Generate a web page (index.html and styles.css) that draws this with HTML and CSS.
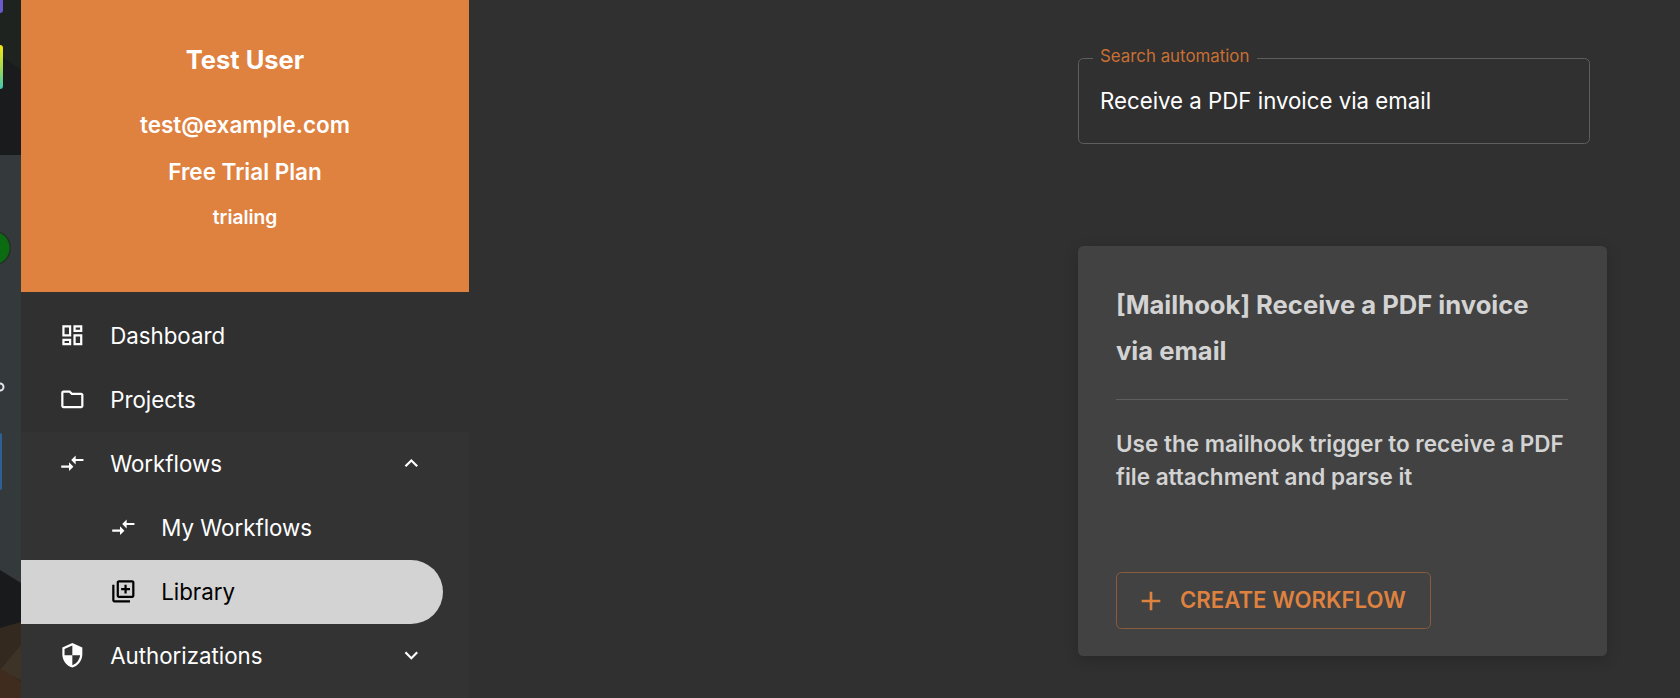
FILE: index.html
```html
<!DOCTYPE html>
<html lang="en">
<head>
<meta charset="utf-8">
<title>Automation library</title>
<link rel="stylesheet" href="styles.css">
</head>
<body>
<div class="app">
  <div class="backdrop">
    <svg class="backdrop-art" width="21" height="698" viewBox="0 0 21 698">
      <rect width="21" height="155" fill="#1a1b1d"/>
      <polygon points="0,0 21,0 21,70 0,55" fill="#1e231f"/>
      <rect x="-8" y="-10" width="11" height="23" rx="3" fill="#6a5acd"/>
      <defs><linearGradient id="rb" x1="0" y1="0" x2="0" y2="1"><stop offset="0" stop-color="#f5e614"/><stop offset="0.5" stop-color="#a6d94a"/><stop offset="1" stop-color="#3fc7b4"/></linearGradient></defs>
      <rect x="-8" y="45" width="11" height="44" rx="3" fill="url(#rb)"/>
      <rect y="155" width="21" height="428" fill="#343a3b"/>
      <circle cx="-7" cy="248" r="18" fill="#262f28"/>
      <circle cx="-7" cy="248" r="16.5" fill="#0b6b10"/>
      <rect x="-8" y="433" width="10" height="57" rx="2" fill="#2f5f95"/>
      <circle cx="0" cy="387" r="3.5" fill="none" stroke="#e6e6ee" stroke-width="2"/>
      <polygon points="0,570 21,583 21,698 0,698" fill="#191a1c"/>
      <polygon points="0,628 21,622 21,698 0,698" fill="#33291f"/>
      <polygon points="21,645 0,670 21,680" fill="#3d3427"/>
      <polygon points="0,668 21,682 21,698 0,698" fill="#402c1f"/>
    </svg>
  </div>
  <aside class="sidebar">
    <header class="profile">
      <h2 class="profile-name">Test User</h2>
      <p class="profile-line">test@example.com</p>
      <p class="profile-line">Free Trial Plan</p>
      <p class="profile-status">trialing</p>
    </header>
    <nav class="nav">
      <a class="nav-item">
        <svg class="nav-icon" viewBox="0 0 24 24"><path d="M19 5v2h-4V5h4M9 5v6H5V5h4m10 8v6h-4v-6h4M9 17v2H5v-2h4M21 3h-8v6h8V3zM11 3H3v10h8V3zm10 8h-8v10h8V11zm-10 4H3v6h8v-6z"/></svg>
        <span>Dashboard</span>
      </a>
      <a class="nav-item">
        <svg class="nav-icon" viewBox="0 0 24 24"><path d="M9.17 6l2 2H20v10H4V6h5.17M10 4H4c-1.1 0-1.99.9-1.99 2L2 18c0 1.1.9 2 2 2h16c1.1 0 2-.9 2-2V8c0-1.1-.9-2-2-2h-8l-2-2z"/></svg>
        <span>Projects</span>
      </a>
      <div class="nav-group">
        <a class="nav-item">
          <svg class="nav-icon" viewBox="0 0 24 24"><path d="M9.01 14H2v2h7.01v3L13 15l-3.99-4v3zm5.98-1v-3H22V8h-7.01V5L11 9l3.99 4z"/></svg>
          <span class="nav-label">Workflows</span>
          <svg class="nav-chevron" viewBox="0 0 24 24"><path d="M12 8l-6 6 1.41 1.41L12 10.83l4.59 4.58L18 14z"/></svg>
        </a>
        <a class="nav-item nav-sub">
          <svg class="nav-icon" viewBox="0 0 24 24"><path d="M9.01 14H2v2h7.01v3L13 15l-3.99-4v3zm5.98-1v-3H22V8h-7.01V5L11 9l3.99 4z"/></svg>
          <span>My Workflows</span>
        </a>
        <a class="nav-item nav-sub is-active">
          <svg class="nav-icon" viewBox="0 0 24 24"><path d="M4 6H2v14c0 1.1.9 2 2 2h14v-2H4V6zm16-4H8c-1.1 0-2 .9-2 2v12c0 1.1.9 2 2 2h12c1.1 0 2-.9 2-2V4c0-1.1-.9-2-2-2zm0 14H8V4h12v12zm-7-2h2v-3h3V9h-3V6h-2v3h-3v2h3z"/></svg>
          <span>Library</span>
        </a>
        <a class="nav-item">
          <svg class="nav-icon" viewBox="0 0 24 24"><path d="M12 1L3 5v6c0 5.55 3.84 10.74 9 12 5.16-1.26 9-6.45 9-12V5l-9-4zm0 10.99h7c-.53 4.12-3.28 7.79-7 8.94V12H5V6.3l7-3.11v8.8z"/></svg>
          <span class="nav-label">Authorizations</span>
          <svg class="nav-chevron" viewBox="0 0 24 24"><path d="M16.59 8.59L12 13.17 7.41 8.59 6 10l6 6 6-6z"/></svg>
        </a>
      </div>
    </nav>
  </aside>
  <main class="content">
    <div class="column">
      <fieldset class="search">
        <legend class="search-legend">Search automation</legend>
        <input class="search-input" type="text" value="Receive a PDF invoice via email">
      </fieldset>
      <article class="card">
        <h3 class="card-title">[Mailhook] Receive a PDF invoice via email</h3>
        <hr class="card-rule">
        <p class="card-text">Use the mailhook trigger to receive a PDF file attachment and parse it</p>
        <button class="create-btn" type="button">
          <svg class="create-icon" viewBox="0 0 24 24"><path d="M19 13h-6v6h-2v-6H5v-2h6V5h2v6h6v2z"/></svg>
          CREATE WORKFLOW
        </button>
      </article>
    </div>
  </main>
</div>
</body>
</html>
```
FILE: styles.css
```css
* { box-sizing: border-box; }
html, body { margin: 0; height: 100%; overflow: hidden; }
body { background: #303030; color: #fff; font-family: Inter, "Liberation Sans", sans-serif; }
.app { display: flex; height: 698px; }
.backdrop { width: 21px; flex: none; background: #343a3b; }
.backdrop-art { display: block; }
.sidebar { width: 448px; flex: none; background: #303030; overflow: hidden; }
.profile { height: 291.5px; background: #df813f; text-align: center; padding-top: 42px; }
.profile-name { margin: 0 0 30px; font-size: 25.5px; line-height: 36px; font-weight: 700; }
.profile-line { margin: 0 0 14px; font-size: 22.5px; line-height: 33px; font-weight: 600; }
.profile-status { margin: 0; font-size: 19.2px; line-height: 30px; font-weight: 600; }
.nav { padding-top: 12px; }
.nav-group { height: 266px; background: #333; }
.nav-item { display: flex; align-items: center; height: 64px; padding-left: 38px; padding-right: 44px; font-size: 22.3px; color: #fff; }
.nav-icon { width: 26.67px; height: 26.67px; flex: none; margin-right: 24.5px; fill: currentColor; }
.nav-label { flex: 1; }
.nav-chevron { width: 26.67px; height: 26.67px; flex: none; fill: currentColor; }
.nav-sub { padding-left: 89px; margin-right: 26px; }
.is-active { background: #d3d3d3; color: #000; border-radius: 0 32px 32px 0; }
.content { flex: 1; padding-left: 609px; padding-right: 72px; }
.column { width: 530px; }
.search { width: 512px; height: 96px; margin: 48px 0 0; padding: 0 18px; border: 1px solid #5e5e5e; border-radius: 5.33px; }
.search-legend { padding: 0 8px 4px 7px; margin-left: -4px; font-size: 16.85px; line-height: 16px; color: #c96f33; }
.search-input { display: block; width: 100%; margin-top: 17px; padding: 0 0 0 3px; background: none; border: 0; outline: 0; color: #fff; font: 400 22.25px/32px Inter, "Liberation Sans", sans-serif; }
.card { width: 529px; height: 410px; margin-top: 102px; padding: 36px 39px 0 38px; background: #424242; border-radius: 5.33px; box-shadow: 0 4px 14px rgba(0,0,0,.18); }
.card-title { margin: 0; padding-right: 24px; font-size: 25.6px; line-height: 46px; font-weight: 700; color: #d3d3d3; }
.card-rule { margin: 25px 0 0; border: 0; border-top: 1px solid #5e5e5e; }
.card-text { margin: 27px 0 0; height: 126px; font-size: 22.5px; line-height: 33px; font-weight: 600; color: #d3d3d3; }
.create-btn { display: flex; align-items: center; height: 57px; margin-top: 19px; padding: 0 24px 0 23px; background: none; border: 1px solid #8a5b3c; border-radius: 5.33px; color: #df813f; fill: currentColor; font: 600 22.2px/1 Inter, "Liberation Sans", sans-serif; }
.create-icon { width: 32px; height: 32px; margin-right: 13px; margin-left: -5px; }
```
